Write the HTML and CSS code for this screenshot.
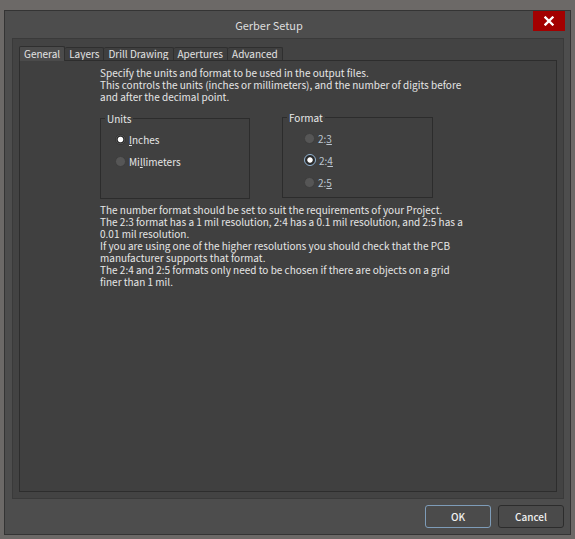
FILE: index.html
```html
<!DOCTYPE html>
<html>
<head>
<meta charset="utf-8">
<title>Gerber Setup</title>
<link rel="stylesheet" href="styles.css">
</head>
<body>
<div class="window">
  <div class="titlebar">
    <div class="title">Gerber Setup</div>
    <div class="close">
      <svg width="10" height="10" viewBox="0 0 10 10"><path d="M1.5 1.5 L8.5 8.5 M8.5 1.5 L1.5 8.5" stroke="#ffffff" stroke-width="2.3" stroke-linecap="square"/></svg>
    </div>
  </div>
  <div class="panel">
    <div class="tabs">
      <div class="tab active">General</div>
      <div class="tab">Layers</div>
      <div class="tab">Drill Drawing</div>
      <div class="tab">Apertures</div>
      <div class="tab">Advanced</div>
    </div>
    <div class="page">
      <div class="text">
        <div class="line">Specify the units and format to be used in the output files.</div>
        <div class="line">This controls the units (inches or millimeters), and the number of digits before</div>
        <div class="line">and after the decimal point.</div>
      </div>
      <div class="groups">
        <div class="group units">
          <span class="legend">Units</span>
          <div class="radio"><span class="dot checked"></span><span class="lbl"><u>I</u>nches</span></div>
          <div class="radio"><span class="dot"></span><span class="lbl">Mi<u>l</u>limeters</span></div>
        </div>
        <div class="group format">
          <span class="legend">Format</span>
          <div class="radio"><span class="dot"></span><span class="lbl alt">2:<u>3</u></span></div>
          <div class="radio"><span class="dot checked focus"></span><span class="lbl alt">2:<u>4</u></span></div>
          <div class="radio"><span class="dot"></span><span class="lbl alt">2:<u>5</u></span></div>
        </div>
      </div>
      <div class="text second">
        <div class="line">The number format should be set to suit the requirements of your Project.</div>
        <div class="line">The 2:3 format has a 1 mil resolution, 2:4 has a 0.1 mil resolution, and 2:5 has a</div>
        <div class="line">0.01 mil resolution.</div>
        <div class="line">If you are using one of the higher resolutions you should check that the PCB</div>
        <div class="line">manufacturer supports that format.</div>
        <div class="line">The 2:4 and 2:5 formats only need to be chosen if there are objects on a grid</div>
        <div class="line">finer than 1 mil.</div>
      </div>
    </div>
  </div>
  <div class="buttons">
    <div class="btn default">OK</div>
    <div class="btn">Cancel</div>
  </div>
</div>
</body>
</html>
```
FILE: styles.css
```css
html, body {
  margin: 0;
  padding: 0;
}
body {
  width: 575px;
  height: 539px;
  background: #6c6967;
  font-family: "Noto Sans CJK TC", "Noto Sans", sans-serif;
  font-size: 10px;
  color: #e6e6e6;
  overflow: hidden;
}
.window {
  box-sizing: border-box;
  margin: 10px 4px 0 4px;
  width: 567px;
  height: 525px;
  background: #4d4d4d;
  border: 1px solid #343434;
  display: flex;
  flex-direction: column;
}
.titlebar {
  height: 26px;
  display: flex;
  align-items: flex-start;
  padding-right: 5px;
}
.title {
  flex: 1;
  text-align: center;
  font-size: 11px;
  color: #dedede;
  line-height: 16px;
  padding-top: 6px;
}
.close {
  width: 32px;
  height: 20px;
  background: #a30000;
  display: flex;
  align-items: center;
  justify-content: center;
}
.panel {
  box-sizing: border-box;
  margin: 1px 6px 0 7px;
  height: 461px;
  background: #434343;
  border: 1px solid #3a3a3a;
  padding: 8px 6px 6px 6px;
  display: flex;
  flex-direction: column;
}
.tabs {
  display: flex;
  height: 13px;
}
.tab {
  box-sizing: border-box;
  height: 14px;
  line-height: 12px;
  padding: 0 4px;
  background: #3f3f3f;
  border: 1px solid #2f2f2f;
  border-bottom: none;
  border-left: none;
  border-radius: 2px 2px 0 0;
  color: #e4e4e4;
}
.tab.active {
  border-left: 1px solid #2f2f2f;
  background: #4b4b4b;
  height: 15px;
  margin-top: -1px;
  padding-top: 1px;
  position: relative;
  z-index: 1;
}
.page {
  flex: 1;
  background: #404040;
  border: 1px solid #2d2d2d;
  padding: 6px 0 0 80px;
}
.text .line {
  height: 12px;
  line-height: 12px;
  white-space: nowrap;
}
.groups {
  display: flex;
  gap: 32px;
  margin-top: 15px;
}
.group {
  box-sizing: border-box;
  position: relative;
  width: 150px;
  height: 81px;
  border: 1px solid #2c2c2c;
  padding-top: 9px;
}
.legend {
  position: absolute;
  top: -6px;
  left: 4px;
  padding: 0 2px;
  background: #404040;
  line-height: 12px;
  color: #e8e8e8;
}
.units {
  padding-left: 14px;
}
.format {
  width: 151px;
  margin-top: -1px;
  padding-left: 21px;
}
.radio {
  display: flex;
  align-items: center;
  height: 22px;
}
.dot {
  box-sizing: border-box;
  width: 11px;
  height: 11px;
  border-radius: 50%;
  background: #565656;
  border: 1px solid #3e3e3e;
  margin-right: 3px;
  flex: none;
}
.dot.checked {
  background: radial-gradient(circle, #ffffff 0, #ffffff 2.3px, #2c2c2c 3.2px, #2c2c2c 3.6px, #5a5a5a 4.3px);
  border-color: #363636;
}
.dot.focus {
  width: 12px;
  height: 12px;
  border: 1.5px solid #94b5d4;
  background: radial-gradient(circle, #ffffff 0, #ffffff 2.3px, #2a2a2a 3.1px);
}
.lbl u {
  text-decoration: underline;
  text-underline-offset: 1px;
}
.lbl.alt {
  color: #bcc6d0;
}
.second {
  margin-top: 5px;
}
.buttons {
  display: flex;
  justify-content: flex-end;
  gap: 7px;
  padding: 6px 6px 0 0;
}
.btn {
  box-sizing: border-box;
  width: 66px;
  height: 23px;
  border: 1px solid #2c2c2c;
  border-radius: 3px;
  background: #4a4a4a;
  display: flex;
  align-items: center;
  justify-content: center;
  color: #f0f0f0;
  font-weight: 500;
}
.btn.default {
  border: 1.5px solid #7e9cb8;
  background: #4b4b4b;
}
```
